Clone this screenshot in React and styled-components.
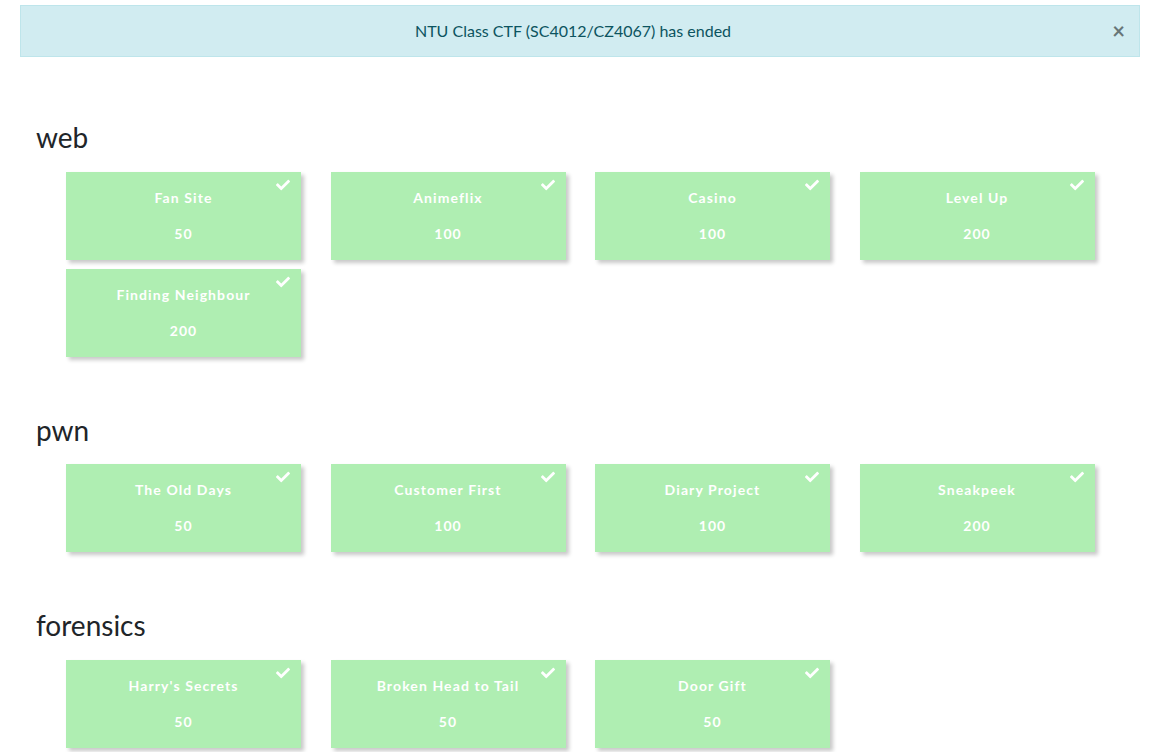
import React from "react";
import styled, { createGlobalStyle } from "styled-components";
import { FaCheck } from "react-icons/fa";

const GlobalStyle = createGlobalStyle`
  body {
    margin: 0;
    background: #ffffff;
    font-family: Lato, "Open Sans", "Liberation Sans", sans-serif;
    color: #212529;
  }
`;

const Page = styled.div`
  padding: 5px 20px 40px 20px;
`;

const Alert = styled.div`
  position: relative;
  height: 52px;
  box-sizing: border-box;
  display: flex;
  align-items: center;
  justify-content: center;
  padding: 0 14px 2px 0;
  background-color: #d1ecf1;
  border: 1px solid #bee5eb;
  color: #0c5460;
  font-size: 16px;
`;

const Close = styled.span`
  position: absolute;
  right: 14px;
  top: 50%;
  transform: translateY(-52%);
  font-size: 22px;
  font-weight: 700;
  color: #000;
  opacity: 0.5;
  cursor: pointer;
`;

const Section = styled.section`
  padding-top: ${(p) => (p.first ? "63px" : "56px")};
  padding-left: 16px;
`;

const Heading = styled.h2`
  margin: 0 0 17px 0;
  padding-top: 1px;
  font-size: 28px;
  font-weight: 400;
  line-height: 1.2;
  color: #212529;
`;

const Grid = styled.div`
  display: grid;
  grid-template-columns: repeat(4, 235px);
  column-gap: 29.5px;
  row-gap: 9px;
  padding-left: 30px;
`;

const Card = styled.div`
  position: relative;
  height: 88px;
  box-sizing: border-box;
  padding-top: 17px;
  background-color: #afeeb2;
  box-shadow: 3px 3px 4px rgba(0, 0, 0, 0.22);
  color: #ffffff;
  text-align: center;
  font-weight: 700;
  font-size: 14px;
  letter-spacing: 1.1px;
  cursor: pointer;
`;

const Title = styled.div`
  line-height: 18px;
`;

const Value = styled.div`
  line-height: 18px;
  margin-top: 18px;
`;

const Solved = styled.span`
  position: absolute;
  top: 6px;
  right: 11px;
  font-size: 14px;
  line-height: 0;
  color: #ffffff;
`;

const categories = [
  {
    name: "web",
    challenges: [
      ["Fan Site", 50],
      ["Animeflix", 100],
      ["Casino", 100],
      ["Level Up", 200],
      ["Finding Neighbour", 200],
    ],
  },
  {
    name: "pwn",
    challenges: [
      ["The Old Days", 50],
      ["Customer First", 100],
      ["Diary Project", 100],
      ["Sneakpeek", 200],
    ],
  },
  {
    name: "forensics",
    challenges: [
      ["Harry's Secrets", 50],
      ["Broken Head to Tail", 50],
      ["Door Gift", 50],
    ],
  },
];

export default function App() {
  return (
    <>
      <GlobalStyle />
      <Page>
        <Alert>
          NTU Class CTF (SC4012/CZ4067) has ended
          <Close>×</Close>
        </Alert>

        {categories.map((cat, i) => (
          <Section key={cat.name} first={i === 0}>
            <Heading>{cat.name}</Heading>
            <Grid>
              {cat.challenges.map(([title, value]) => (
                <Card key={title}>
                  <Solved>
                    <FaCheck />
                  </Solved>
                  <Title>{title}</Title>
                  <Value>{value}</Value>
                </Card>
              ))}
            </Grid>
          </Section>
        ))}
      </Page>
    </>
  );
}
